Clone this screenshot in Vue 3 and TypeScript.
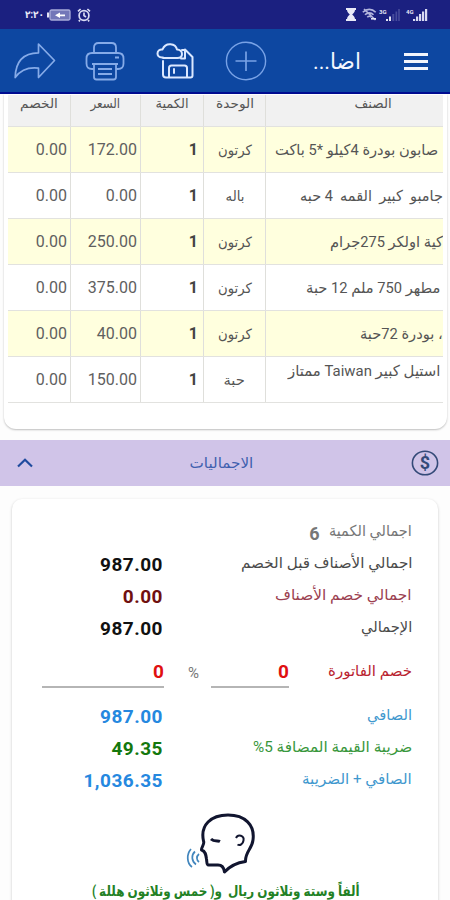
<script setup lang="ts">
import type { Directive } from 'vue'

interface Item {
  name: string
  width: number
  right: number
  unit: string
  unitWidth: number
  qty: string
  price: string
  discount: string
  raised?: boolean
}

interface Total {
  label: string
  width: number
  value?: string
  tone: string
}

const headers = [
  { text: 'الخصم', width: 38 },
  { text: 'السعر', width: 30 },
  { text: 'الكمية', width: 33 },
  { text: 'الوحدة', width: 38 },
  { text: 'الصنف', width: 37 },
]

const items: Item[] = [
  { name: 'صابون بودرة 4كيلو *5 باكت', width: 163, right: 5, unit: 'كرتون', unitWidth: 34, qty: '1', price: '172.00', discount: '0.00' },
  { name: 'جامبو  كبير  القمه  4 حبه', width: 143, right: 0, unit: 'باله', unitWidth: 19, qty: '1', price: '0.00', discount: '0.00' },
  { name: 'كية اولكر 275جرام', width: 113, right: 0, unit: 'كرتون', unitWidth: 34, qty: '1', price: '250.00', discount: '0.00' },
  { name: 'مطهر 750 ملم 12 حبة', width: 134, right: 3, unit: 'كرتون', unitWidth: 34, qty: '1', price: '375.00', discount: '0.00' },
  { name: '، بودرة 72حبة', width: 83, right: 0, unit: 'كرتون', unitWidth: 34, qty: '1', price: '40.00', discount: '0.00' },
  { name: 'استيل كبير Taiwan ممتاز', width: 153, right: 3, unit: 'حبة', unitWidth: 21, qty: '1', price: '150.00', discount: '0.00', raised: true },
]

const before: Total[] = [
  { label: 'اجمالي الأصناف قبل الخصم', width: 172, value: '987.00', tone: 'black' },
  { label: 'اجمالي خصم الأصناف', width: 137, value: '0.00', tone: 'maroon' },
  { label: 'الإجمالي', width: 51, value: '987.00', tone: 'black' },
]

const after: Total[] = [
  { label: 'الصافي', width: 45, value: '987.00', tone: 'blue' },
  { label: 'ضريبة القيمة المضافة 5%', width: 159, value: '49.35', tone: 'green' },
  { label: 'الصافي + الضريبة', width: 110, value: '1,036.35', tone: 'blue' },
]

/* Condenses or widens a run of text to the given width in pixels. */
const vFit: Directive<HTMLElement, number> = {
  mounted(el, { value }) {
    const natural = el.offsetWidth
    if (natural > 0) el.style.transform = `scaleX(${value / natural})`
  },
}
</script>

<template>
  <div class="screen">
    <div class="status">
      <div class="status-side">
        <span v-fit="17" class="clock fit-left">٢:٢٠</span>
        <svg class="battery" width="24" height="12" viewBox="0 0 24 12">
          <rect x="3" y="1" width="20" height="10" rx="1.5" fill="#7377b8" stroke="#a9acd9" stroke-width="1.3" />
          <rect x="0" y="3.5" width="2.2" height="5" fill="#e4e5f5" />
          <path d="M8 6.3 L13 3.6 V5.4 H18 V7.2 H13 V9 Z" fill="#fff" />
        </svg>
        <svg width="14" height="14" viewBox="0 0 14 14" fill="none" stroke="#d9dbf3" stroke-width="1.7">
          <circle cx="7" cy="7.5" r="4.9" />
          <path d="M7 4.5V7.5L9 9M1 3.4L3.6 1M13 3.4L10.4 1M3 12L1.8 13.4M11 12L12.2 13.4" />
        </svg>
      </div>
      <div class="status-side right">
        <svg width="10" height="13" viewBox="0 0 10 13">
          <path d="M0 0H10V2H9C9 4.5 7 5.5 6.2 6.5C7 7.5 9 8.5 9 11H10V13H0V11H1C1 8.5 3 7.5 3.8 6.5C3 5.5 1 4.5 1 2H0Z" fill="#e9eaf8" />
        </svg>
        <svg width="15" height="13" viewBox="0 0 15 13" fill="none" stroke="#b3b5dd" stroke-width="1.6">
          <path d="M.8 4.2C4.5.4 10 .4 13.7 4.2M3 6.8C5.5 4.2 9 4.2 11.5 6.8M5.3 9.3C6.6 7.9 8 7.9 9.4 9.3M2 1L13.5 12" />
          <path d="M9 10.8H14" stroke="#e4e5f5" />
        </svg>
        <svg width="22" height="14" viewBox="0 0 22 14">
          <text x="0" y="6" class="net">3G</text>
          <path d="M7 11H9V13H7ZM10 8.5H12V13H10Z" fill="#e4e5f5" />
          <path d="M13.3 6H15.3V13H13.3ZM16.5 3.5H18.2V13H16.5ZM19.2 1H20.8V13H19.2Z" fill="#474b9c" />
        </svg>
        <svg width="22" height="14" viewBox="0 0 22 14">
          <text x="0" y="6" class="net">4G</text>
          <path d="M7 11H9.2V13H7ZM10 8.5H12.2V13H10ZM13 6H15.2V13H13ZM16 3.5H18.2V13H16ZM19 1H21.2V13H19Z" fill="#d9dbf3" />
        </svg>
      </div>
    </div>

    <div class="appbar">
      <svg class="share" width="42" height="38" viewBox="0 0 42 38" fill="none" stroke="#86abe8" stroke-width="1.7" stroke-linejoin="round">
        <path d="M24.5 2L40.5 18.5L24.5 35.5V26.2C14.5 25 7 27.5 1.2 35.5C1.5 20 9 11 24.5 10.8Z" />
      </svg>
      <svg class="print" width="40" height="40" viewBox="0 0 40 40" fill="none" stroke="#86abe8" stroke-width="1.8" stroke-linejoin="round">
        <path d="M9 12V6.5Q9 2 13.5 2H26.500Q31 2 31 6.5V12" />
        <path d="M9 28H7Q1.500 28 1.500 22.500V17.500Q1.500 12 7 12H33Q38.500 12 38.500 17.500V22.500Q38.500 28 33 28H31" />
        <path d="M7 23H33M9 23V36Q9 38.500 11.500 38.500H28.500Q31 38.500 31 36V23M13 28H27M13 33H27M30 16.500H34" />
      </svg>
      <svg class="save" width="40" height="38" viewBox="0 0 40 38" fill="none" stroke="#dbe8ff" stroke-width="2" stroke-linejoin="round" stroke-linecap="round">
        <path d="M7 15.500H6C2.500 15.500 1.500 13 1.500 11.500C1.500 8.500 4 7 6.500 7.500C8 3.500 11 2 14.500 2.200C18 2.500 20.500 5 21 7.500C24 7.500 26 9.500 26 12C26 14.500 24 16 21.500 16H7" />
        <path d="M7 19V32.500Q7 35.500 10 35.500H34.500Q36.500 35.500 36.500 33.500V15L29 7.500V16.500H25" />
        <path d="M13 35V26Q13 23.500 15.500 23.500H28.500Q31 23.500 31 26V35M18 27V31M26 8H29" />
      </svg>
      <svg class="add" width="42" height="40" viewBox="0 0 42 40" fill="none" stroke="#78a2e6" stroke-width="1.4">
        <ellipse cx="21" cy="20" rx="19.600" ry="18.700" />
        <path d="M10.500 20H31.500M21 10.500V30" stroke-width="1.700" />
      </svg>
      <div class="title"><span v-fit="48" class="fit-right">اضا...</span></div>
      <div class="menu"><i></i><i></i><i></i></div>
    </div>

    <div class="table-card">
      <div class="row head">
        <div v-for="h in headers" :key="h.text" class="cell center"><span v-fit="h.width" dir="rtl">{{ h.text }}</span></div>
      </div>
      <div v-for="(r, n) in items" :key="n" class="row" :class="{ tint: n % 2 === 0 }">
        <div class="cell num">{{ r.discount }}</div>
        <div class="cell num">{{ r.price }}</div>
        <div class="cell num qty">{{ r.qty }}</div>
        <div class="cell center"><span v-fit="r.unitWidth">{{ r.unit }}</span></div>
        <div class="cell name" :class="{ raised: r.raised }" :style="{ paddingRight: r.right + 'px' }">
          <span v-fit="r.width" class="fit-right" dir="rtl">{{ r.name }}</span>
        </div>
      </div>
    </div>

    <div class="section">
      <svg width="16" height="10" viewBox="0 0 16 10" fill="none" stroke="#1f4b9e" stroke-width="2.200"><path d="M1 8.500L8 1.800L15 8.500" /></svg>
      <span v-fit="64" class="section-title">الاجماليات</span>
      <svg class="coin" width="28" height="26" viewBox="0 0 28 26">
        <ellipse cx="14" cy="13" rx="12.600" ry="11.800" fill="none" stroke="#344a78" stroke-width="1.600" />
        <text x="14" y="19" text-anchor="middle" class="dollar">$</text>
      </svg>
    </div>

    <div class="totals">
      <div class="line grey">
        <span class="six">6</span>
        <span v-fit="83" class="label fit-right">اجمالي الكمية</span>
      </div>
      <div v-for="t in before" :key="t.label" class="line" :class="t.tone">
        <span class="value">{{ t.value }}</span>
        <span v-fit="t.width" class="label fit-right" dir="rtl">{{ t.label }}</span>
      </div>
      <div class="line discount">
        <span class="field wide">0</span>
        <span class="percent">%</span>
        <span class="field">0</span>
        <span class="discount-label"><span v-fit="84" class="label fit-right">خصم الفاتورة</span></span>
      </div>
      <div v-for="t in after" :key="t.label" class="line" :class="t.tone">
        <span class="value">{{ t.value }}</span>
        <span v-fit="t.width" class="label fit-right" dir="rtl">{{ t.label }}</span>
      </div>
      <svg class="speaker" width="72" height="64" viewBox="0 0 72 64" fill="none">
        <path d="M17.500 28C14 12 25 2 42 2C59 2 69 12 67 27C66 36 59 39 59.500 48.500C52 49.500 44 53 38.500 59C38 55 36 52 32 52H22.500C20.500 52 21 49 20.500 46C20 42 19.500 38 15.500 37C15 34.500 19 31 17.500 28Z" stroke="#11152f" stroke-width="3" stroke-linejoin="round" />
        <path d="M25 26C28 29 32 27.500 34 28.500" stroke="#11152f" stroke-width="3" />
        <path d="M50 25C52 20.500 58.500 22.500 57.500 27.500C57 31 54 33 51.500 31.500" stroke="#11152f" stroke-width="2" />
        <path d="M5 36C.5 41 .5 50 6 54M9 38.500C5 42 5.500 48.500 10 51.500M13 41C10 43.500 10.500 47 13 49" stroke="#4286bd" stroke-width="1.700" />
      </svg>
      <div class="words"><span v-fit="268" class="fit-right" dir="rtl">ألفاً وستة وثلاثون ريال&nbsp; و( خمس وثلاثون هللة )</span></div>
    </div>
  </div>
</template>

<style>
body {
  margin: 0;
  overflow: hidden;
}
</style>

<style scoped>
.screen {
  width: 450px;
  height: 900px;
  overflow: hidden;
  background: #fdfdfd;
  font-family: Roboto, "DejaVu Sans", sans-serif;
  display: flex;
  flex-direction: column;
}
.screen > * {
  flex: none;
  box-sizing: border-box;
}
span {
  display: inline-block;
  white-space: pre;
}
svg {
  display: block;
  flex: none;
}
.fit-right {
  transform-origin: right center;
}
.fit-left {
  transform-origin: left center;
}
.status {
  height: 29px;
  background: #1b2080;
  display: flex;
  justify-content: space-between;
  padding: 0 22px 0 25px;
}
.status-side {
  display: flex;
  align-items: center;
  gap: 6px;
}
.status-side.right {
  gap: 2px;
}
.status-side.right svg:first-child {
  margin-right: 4px;
}
.status-side.right svg:last-child {
  margin-left: 3px;
}
.clock {
  width: 19px;
  color: #e9eaf8;
  font-size: 10px;
  font-weight: 700;
  direction: ltr;
}
.battery {
  margin-left: -3px;
}
.net {
  fill: #e4e5f5;
  font: 700 6px Roboto, sans-serif;
}
.appbar {
  height: 65px;
  background: #0d47a1;
  border-bottom: 2px solid #000c91;
  display: flex;
  align-items: center;
  padding: 1px 22px 0 14px;
}
.print {
  margin-left: 29px;
}
.save {
  margin-left: 31px;
}
.add {
  margin-left: 29px;
}
.title {
  width: 94px;
  margin-right: 43px;
  color: #f4f7ff;
  font-size: 22px;
  direction: rtl;
}
.menu {
  width: 24px;
  display: grid;
  gap: 4px;
}
.menu i {
  height: 3px;
  background: #f2f5fc;
}
.table-card {
  height: 335px;
  margin: 0 3px 0 4px;
  padding: 0 4px;
  background: #fff;
  border-radius: 0 0 12px 12px;
  box-shadow: 0 1px 2px rgba(0, 0, 0, 0.25);
}
.row {
  display: grid;
  grid-template-columns: 63px 70px 63px 62px 177px;
  height: 46px;
  box-sizing: border-box;
  border-bottom: 1px solid #e2e2df;
}
.row.tint {
  background: #ffffde;
}
.row.head {
  height: 32px;
  margin-top: 1px;
  background: #f1f1f1;
}
.cell {
  display: flex;
  align-items: center;
  border-right: 1px solid #dfdfdb;
  box-sizing: border-box;
  min-width: 0;
  color: #555;
  font-size: 14px;
}
.head .cell {
  align-items: flex-start;
  line-height: 18px;
  font-size: 13px;
}
.head .cell:last-child {
  padding-left: 38px;
}
.cell:last-child {
  border-right: 0;
}
.center {
  justify-content: center;
}
.num {
  justify-content: flex-end;
  padding-right: 3px;
  font-size: 16px;
  color: #606060;
}
.qty {
  padding-right: 5px;
  font-weight: 700;
  color: #444;
}
.name {
  justify-content: flex-end;
  overflow: hidden;
  font-size: 15px;
}
.name.raised {
  padding-bottom: 18px;
}
.section {
  height: 46px;
  margin-top: 11px;
  background: #d0c4e8;
  display: flex;
  align-items: center;
  justify-content: space-between;
  padding: 0 11px 1px 17px;
}
.section-title {
  color: #3f5fae;
  font-size: 14px;
  margin-right: 2px;
}
.dollar {
  fill: #344a78;
  font: 700 18px Roboto, sans-serif;
}
.totals {
  height: 440px;
  margin: 13px 12px 0;
  padding: 17px 26px 0 30px;
  background: #fff;
  border-radius: 10px;
  box-shadow: 0 1px 3px rgba(0, 0, 0, 0.22);
}
.line {
  height: 32px;
  display: flex;
  align-items: center;
  justify-content: space-between;
}
.label {
  font-size: 15px;
  margin-top: -3px;
}
.value {
  width: 121px;
  text-align: right;
  font-size: 19px;
  font-weight: 700;
  letter-spacing: 0.500px;
}
.grey {
  color: #777;
  justify-content: flex-end;
}
.six {
  width: 12px;
  margin-right: 5px;
  font-size: 18px;
  font-weight: 700;
  padding-top: 3px;
}
.black {
  color: #4b4b4b;
}
.black .value {
  color: #111;
}
.maroon {
  color: #9b4050;
}
.maroon .value {
  color: #701010;
}
.blue {
  color: #3f98ce;
}
.blue .value {
  color: #2588df;
}
.green {
  color: #39973c;
}
.green .value {
  color: #14780d;
}
.discount {
  height: 43px;
  margin: 7px 0 6px;
  color: #b92330;
}
.discount-label {
  display: flex;
  justify-content: flex-end;
  width: 111px;
}
.field {
  width: 78px;
  height: 30px;
  line-height: 28px;
  box-sizing: border-box;
  border-bottom: 2px solid #b5b5b5;
  text-align: right;
  font-size: 19px;
  font-weight: 700;
  color: #e01010;
}
.field.wide {
  width: 122px;
}
.percent {
  margin-left: 12px;
  color: #777;
  font-size: 15px;
}
.speaker {
  margin: 17px 0 0 144px;
}
.words {
  display: flex;
  justify-content: flex-end;
  padding-right: 52px;
  margin-top: 6px;
  font-size: 14px;
  font-weight: 700;
  color: #238125;
}
</style>
